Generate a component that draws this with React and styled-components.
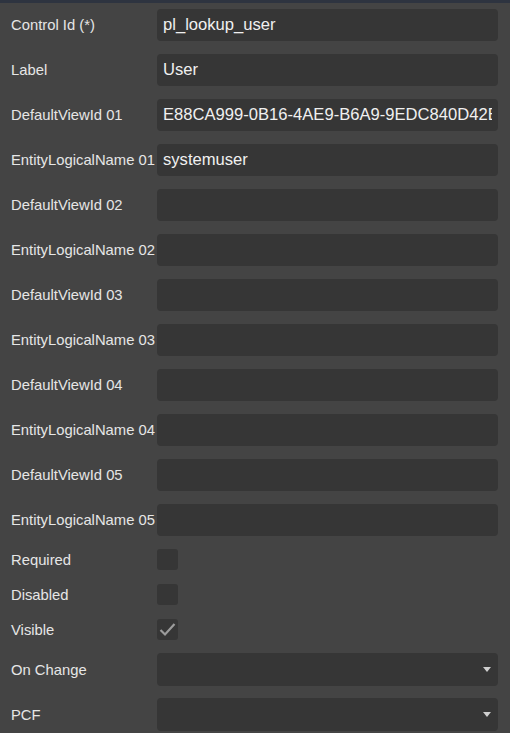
import React from 'react';
import styled, { createGlobalStyle } from 'styled-components';

const GlobalStyle = createGlobalStyle`
  html, body {
    margin: 0;
    padding: 0;
    background: #444444;
  }
  body {
    font-family: "Liberation Sans", Arial, sans-serif;
  }
`;

const Panel = styled.div`
  width: 510px;
  height: 733px;
  background: #444444;
  border-top: 3px solid #2e3440;
  box-sizing: border-box;
  overflow: hidden;
`;

const Form = styled.div`
  display: flex;
  flex-direction: column;
  gap: 13px;
  padding: 6px 12px 0 11px;
`;

const Group = styled.div`
  display: flex;
  flex-direction: column;
  gap: ${({ gap }) => gap}px;
`;

const Row = styled.div`
  display: grid;
  grid-template-columns: 146px minmax(0, 1fr);
  align-items: center;
  height: ${({ h }) => h}px;
`;

const Label = styled.div`
  color: #e6e6e6;
  font-size: 14.8px;
  white-space: nowrap;
`;

const TextBox = styled.div`
  height: 32px;
  background: #363636;
  border-radius: 4px;
  padding: 0 6px;
  box-sizing: border-box;
  min-width: 0;
`;

const Value = styled.div`
  color: #f0f0f0;
  font-size: 16.6px;
  line-height: 32px;
  white-space: nowrap;
  overflow: hidden;
`;

const CheckBox = styled.div`
  width: 21px;
  height: 21px;
  background: #363636;
  border-radius: 3px;
  display: flex;
  align-items: center;
  justify-content: center;
`;

const SelectBox = styled.div`
  height: 33px;
  background: #363636;
  border-radius: 4px;
  display: flex;
  align-items: center;
  justify-content: flex-end;
  padding-right: 7px;
  box-sizing: border-box;
`;

const Arrow = styled.div`
  width: 0;
  height: 0;
  border-left: 4px solid transparent;
  border-right: 4px solid transparent;
  border-top: 5px solid #cfcfcf;
`;

const fields = [
  ['Control Id (*)', 'pl_lookup_user'],
  ['Label', 'User'],
  ['DefaultViewId 01', 'E88CA999-0B16-4AE9-B6A9-9EDC840D42BA'],
  ['EntityLogicalName 01', 'systemuser'],
  ['DefaultViewId 02', ''],
  ['EntityLogicalName 02', ''],
  ['DefaultViewId 03', ''],
  ['EntityLogicalName 03', ''],
  ['DefaultViewId 04', ''],
  ['EntityLogicalName 04', ''],
  ['DefaultViewId 05', ''],
  ['EntityLogicalName 05', ''],
];

const checks = [
  ['Required', false],
  ['Disabled', false],
  ['Visible', true],
];

const Check = () => (
  <svg width="21" height="21" viewBox="0 0 21 21">
    <polyline
      points="3.5,11 8,15.5 17.5,5"
      fill="none"
      stroke="#9c9c9c"
      strokeWidth="2.2"
    />
  </svg>
);

export default function App() {
  return (
    <>
      <GlobalStyle />
      <Panel>
        <Form>
          {fields.map(([label, value]) => (
            <Row key={label} h={32}>
              <Label>{label}</Label>
              <TextBox>
                <Value>{value}</Value>
              </TextBox>
            </Row>
          ))}
          <Group gap={14}>
            {checks.map(([label, on]) => (
              <Row key={label} h={21}>
                <Label>{label}</Label>
                <CheckBox>{on && <Check />}</CheckBox>
              </Row>
            ))}
          </Group>
          <Group gap={12}>
            {['On Change', 'PCF'].map((label) => (
              <Row key={label} h={33}>
                <Label>{label}</Label>
                <SelectBox>
                  <Arrow />
                </SelectBox>
              </Row>
            ))}
          </Group>
        </Form>
      </Panel>
    </>
  );
}
